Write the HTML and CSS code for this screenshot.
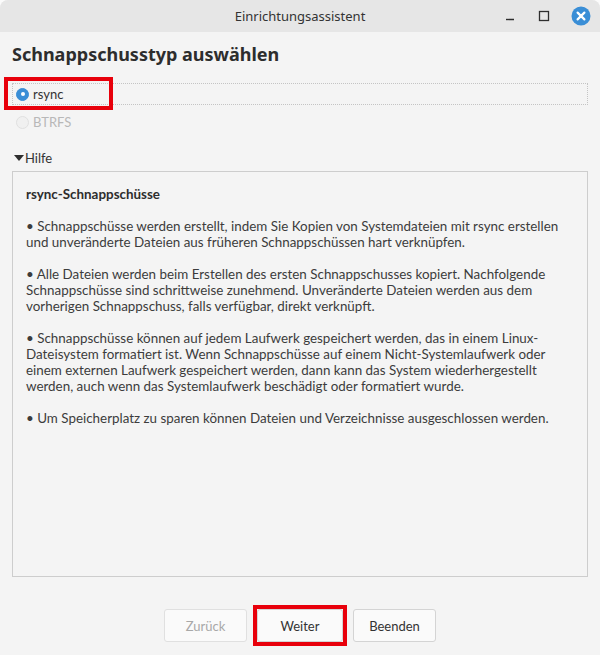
FILE: index.html
```html
<!DOCTYPE html>
<html lang="de">
<head>
    <meta charset="UTF-8">
    <title>Einrichtungsassistent</title>
    <link rel="stylesheet" href="styles.css">
</head>
<body>
    <div class="window">
        <header class="titlebar">
            <span class="title">Einrichtungsassistent</span>
            <div class="controls">
                <svg class="ctl" width="14" height="14" viewBox="0 0 14 14"><path d="M3 10.5h8" stroke="#2e2e2e" stroke-width="1.4"/></svg>
                <svg class="ctl" width="14" height="14" viewBox="0 0 14 14"><rect x="2.5" y="2.5" width="9" height="9" fill="none" stroke="#2e2e2e" stroke-width="1.3"/></svg>
                <svg class="ctl close" width="20" height="20" viewBox="0 0 20 20"><circle cx="10" cy="10" r="9.5" fill="#3a8ed6"/><path d="M6.6 6.6l6.8 6.8M13.4 6.6l-6.8 6.8" stroke="#fff" stroke-width="2.2" stroke-linecap="round"/></svg>
            </div>
        </header>

        <main class="content">
            <h1>Schnappschusstyp auswählen</h1>

            <div class="options">
                <label class="option focused">
                    <span class="radio checked"></span>rsync
                    <span class="mark"></span>
                </label>
                <label class="option disabled">
                    <span class="radio"></span>BTRFS
                </label>
            </div>

            <div class="expander"><span class="arrow"></span>Hilfe</div>

            <div class="helpbox">
                <p class="help-title">rsync-Schnappschüsse</p>
                <p>• Schnappschüsse werden erstellt, indem Sie Kopien von Systemdateien mit rsync erstellen<br>und unveränderte Dateien aus früheren Schnappschüssen hart verknüpfen.</p>
                <p>• Alle Dateien werden beim Erstellen des ersten Schnappschusses kopiert. Nachfolgende<br>Schnappschüsse sind schrittweise zunehmend. Unveränderte Dateien werden aus dem<br>vorherigen Schnappschuss, falls verfügbar, direkt verknüpft.</p>
                <p>• Schnappschüsse können auf jedem Laufwerk gespeichert werden, das in einem Linux-<br>Dateisystem formatiert ist. Wenn Schnappschüsse auf einem Nicht-Systemlaufwerk oder<br>einem externen Laufwerk gespeichert werden, dann kann das System wiederhergestellt<br>werden, auch wenn das Systemlaufwerk beschädigt oder formatiert wurde.</p>
                <p>• Um Speicherplatz zu sparen können Dateien und Verzeichnisse ausgeschlossen werden.</p>
            </div>

            <div class="buttons">
                <button class="btn" disabled>Zurück</button>
                <span class="mark-box"><button class="btn">Weiter</button></span>
                <button class="btn">Beenden</button>
            </div>
        </main>
    </div>
</body>
</html>
```

FILE: styles.css
```css
:root {
    --bg-color: #f4f4f4;
    --title-bg: #e6e6e6;
    --text-color: #3c3c3c;
    --border-color: #cdcdcd;
    --accent: #3a8ed6;
    --mark: #e8000b;
}
* {
    box-sizing: border-box;
}
body {
    margin: 0;
    background: #fbfbfb;
    font-family: Lato, 'Liberation Sans', sans-serif;
    font-size: 13px;
    color: var(--text-color);
}
.window {
    width: 600px;
    height: 655px;
    background: var(--bg-color);
    border-radius: 8px 8px 0 0;
    overflow: hidden;
    display: flex;
    flex-direction: column;
}
.titlebar {
    height: 32px;
    background: var(--title-bg);
    display: flex;
    align-items: center;
    justify-content: center;
    position: relative;
}
.title {
    font-family: 'Noto Sans', sans-serif;
    font-size: 13px;
    color: #333;
}
.controls {
    position: absolute;
    right: 9px;
    top: 6px;
    display: flex;
    align-items: center;
    gap: 20px;
}
.ctl {
    display: block;
}
.content {
    flex: 1;
    padding: 0 12px;
    display: flex;
    flex-direction: column;
}
h1 {
    margin: 10px 0 0;
    font-family: 'Noto Sans', sans-serif;
    font-size: 18px;
    font-weight: bold;
    color: #2d2d2d;
    line-height: 24px;
}
.options {
    margin-top: 17px;
    display: flex;
    flex-direction: column;
    gap: 6px;
}
.option {
    height: 22px;
    display: flex;
    align-items: center;
    padding-left: 3px;
    position: relative;
}
.option.focused {
    border: 1px dotted #c4c4c4;
    color: #333;
}
.option.disabled {
    color: #b8b8b8;
    padding-left: 4px;
}
.radio {
    width: 13px;
    height: 13px;
    border-radius: 50%;
    border: 1px solid #e0e0e0;
    background: #f0f0f0;
    margin-right: 4px;
    position: relative;
}
.radio.checked {
    background: var(--accent);
    border-color: var(--accent);
}
.radio.checked::after {
    content: "";
    position: absolute;
    left: 3.5px;
    top: 3.5px;
    width: 4px;
    height: 4px;
    border-radius: 50%;
    background: #fff;
}
.mark {
    position: absolute;
    left: -9px;
    top: -7px;
    width: 109px;
    height: 33px;
    border: 4px solid var(--mark);
}
.expander {
    margin-top: 17px;
    display: flex;
    align-items: center;
    color: #333;
}
.arrow {
    width: 0;
    height: 0;
    border-left: 5px solid transparent;
    border-right: 5px solid transparent;
    border-top: 6px solid #2e2e2e;
    margin: 0 1px 0 2px;
}
.helpbox {
    margin-top: 5px;
    height: 406px;
    border: 1px solid var(--border-color);
    padding: 14px 13px 12px;
    font-size: 13.4px;
    line-height: 16px;
}
.helpbox p {
    margin: 0 0 16px;
    white-space: nowrap;
}
.help-title {
    font-weight: bold;
    color: #2d2d2d;
}
.buttons {
    margin-top: 28px;
    display: flex;
    justify-content: center;
    align-items: center;
    gap: 6px;
}
.btn {
    width: 83px;
    height: 33px;
    font-family: inherit;
    font-size: 13px;
    color: #333;
    background: #fafafa;
    border: 1px solid #d4d4d4;
    border-radius: 3px;
}
.btn:disabled {
    color: #a8a8a8;
    border-color: #e0e0e0;
}
.mark-box {
    border: 4px solid var(--mark);
    display: flex;
}
.mark-box .btn {
    width: 86px;
}
```
